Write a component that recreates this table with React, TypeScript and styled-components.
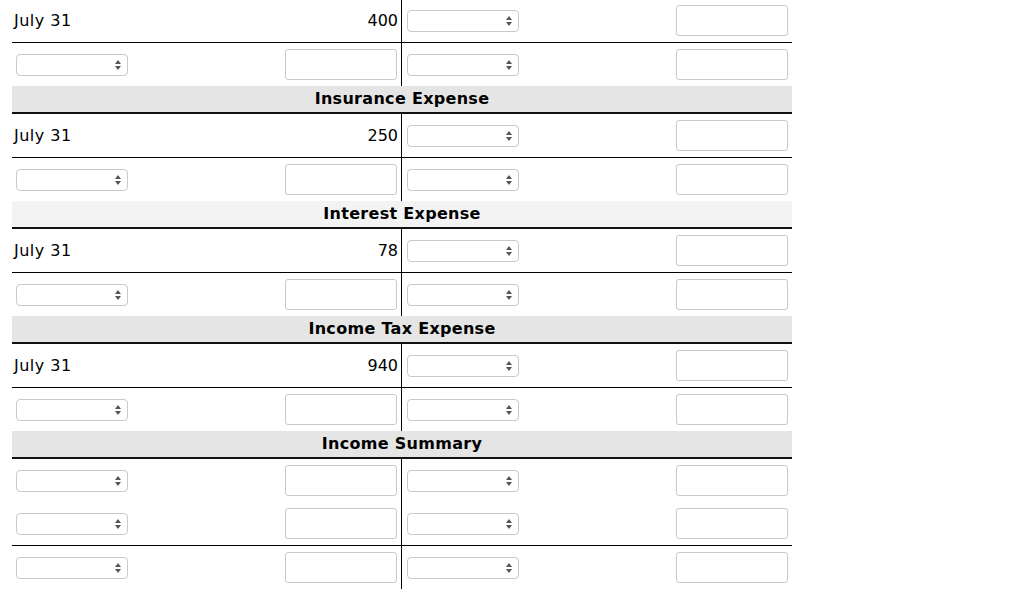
import React from "react";
import styled, { createGlobalStyle } from "styled-components";

const GlobalStyle = createGlobalStyle`
  body {
    margin: 0;
    background: #fff;
    font-family: "DejaVu Sans", Verdana, sans-serif;
    color: #000;
  }
`;

const Sheet = styled.div`
  width: 780px;
  margin: -1px 0 0 12px;
`;

const AccountTitle = styled.div<{ $shade: string }>`
  height: 26px;
  line-height: 26px;
  background: ${(p) => p.$shade};
  border-bottom: 2px solid #111;
  text-align: center;
  font-weight: bold;
  font-size: 16px;
  letter-spacing: 0.3px;
`;

const Row = styled.div<{ $ruled?: boolean }>`
  display: grid;
  grid-template-columns: 390px 390px;
  height: 43px;
  border-bottom: ${(p) => (p.$ruled ? "1px solid #000" : "0")};
`;

const Side = styled.div<{ $debit?: boolean; $lead?: number }>`
  display: flex;
  align-items: center;
  justify-content: space-between;
  padding: 0 4px 0 ${(p) => p.$lead ?? 4}px;
  border-right: ${(p) => (p.$debit ? "1px solid #000" : "0")};
  box-sizing: border-box;
`;

const DateLabel = styled.span`
  font-size: 16px;
  letter-spacing: 0.5px;
`;

const Amount = styled.span`
  font-size: 16px;
  margin-right: -1px;
`;

const AmountInput = styled.input`
  width: 112px;
  height: 31px;
  box-sizing: border-box;
  border: 1px solid #c9c9c9;
  border-radius: 3px;
  background: #fff;
  margin: 0;
  padding: 0 4px;
  font: inherit;
`;

const SelectWrap = styled.div`
  position: relative;
  width: 112px;
  height: 22px;
`;

const AccountSelect = styled.select`
  appearance: none;
  width: 112px;
  height: 22px;
  box-sizing: border-box;
  border: 1px solid #c9c9c9;
  border-radius: 4px;
  background: #fff;
  margin: 0;
  font: inherit;
  font-size: 13px;
`;

const Arrows = styled.svg`
  position: absolute;
  right: 7px;
  top: 6px;
  pointer-events: none;
`;

const Picker = () => (
  <SelectWrap>
    <AccountSelect defaultValue="">
      <option value=""></option>
    </AccountSelect>
    <Arrows width="6" height="10" viewBox="0 0 6 10">
      <path d="M3 0 L6 4 L0 4 Z" fill="#555" />
      <path d="M0 6 L6 6 L3 10 Z" fill="#555" />
    </Arrows>
  </SelectWrap>
);

const PostedRow = ({ amount }: { amount: string }) => (
  <Row $ruled>
    <Side $debit $lead={2}>
      <DateLabel>July 31</DateLabel>
      <Amount>{amount}</Amount>
    </Side>
    <Side $lead={5}>
      <Picker />
      <AmountInput />
    </Side>
  </Row>
);

const EntryRow = ({ ruled }: { ruled?: boolean }) => (
  <Row $ruled={ruled}>
    <Side $debit>
      <Picker />
      <AmountInput />
    </Side>
    <Side $lead={5}>
      <Picker />
      <AmountInput />
    </Side>
  </Row>
);

const accounts = [
  { title: "", shade: "", amount: "400" },
  { title: "Insurance Expense", shade: "#e5e5e5", amount: "250" },
  { title: "Interest Expense", shade: "#f3f3f3", amount: "78" },
  { title: "Income Tax Expense", shade: "#e5e5e5", amount: "940" },
];

export default function App() {
  return (
    <>
      <GlobalStyle />
      <Sheet>
        {accounts.map((a) => (
          <React.Fragment key={a.amount}>
            {a.title && <AccountTitle $shade={a.shade}>{a.title}</AccountTitle>}
            <PostedRow amount={a.amount} />
            <EntryRow />
          </React.Fragment>
        ))}
        <AccountTitle $shade="#e5e5e5">Income Summary</AccountTitle>
        <EntryRow />
        <EntryRow ruled />
        <EntryRow />
      </Sheet>
    </>
  );
}
